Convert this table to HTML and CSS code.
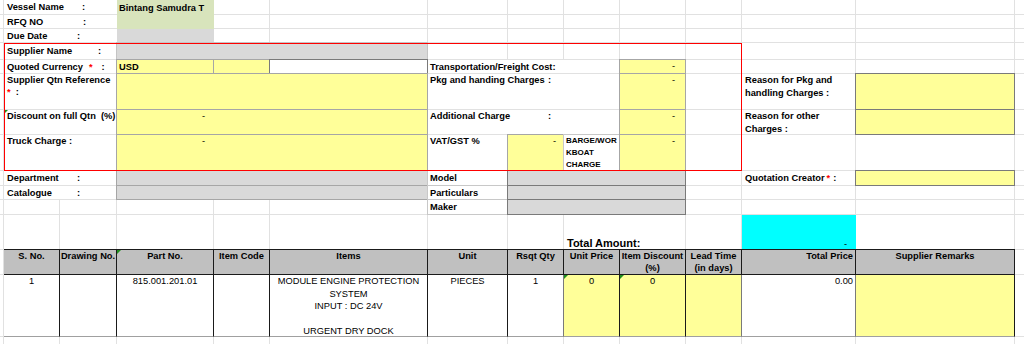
FILE: index.html
```html
<!DOCTYPE html>
<html>
<head>
<meta charset="utf-8">
<title>Supplier Quotation</title>
<link rel="stylesheet" href="styles.css">
</head>
<body>
<div class="sheet">
  <div class="cell lab mid a-vessel-l"><span class="k w75">Vessel Name</span>:</div>
  <div class="cell green val-top a-vessel-v">Bintang Samudra T</div>
  <div class="cell lab mid a-rfq-l"><span class="k w76">RFQ NO</span>:</div>
  <div class="cell lab mid a-due-l"><span class="k w70">Due Date</span>:</div>
  <div class="cell grey a-due-v"></div>

  <div class="cell lab mid a-sup-l"><span class="k w91">Supplier Name</span>:</div>
  <div class="cell grey bx a-sup-v"></div>
  <div class="cell lab mid a-cur-l"><span class="k">Quoted Currency</span><span class="req g6">*</span><span class="g9">:</span></div>
  <div class="cell yel bx mid b a-cur-v1">USD</div>
  <div class="cell yel bx a-cur-v2"></div>
  <div class="cell white bxd a-cur-v3"></div>
  <div class="cell lab top a-ref-l"><div>Supplier Qtn Reference</div><div><span class="req">*</span><span class="g5">:</span></div></div>
  <div class="cell yel bx a-ref-v"></div>
  <div class="cell lab top tri a-disc-l">Discount on full Qtn&nbsp; (%)</div>
  <div class="cell yel bx dash-mid a-disc-v">-</div>
  <div class="cell lab top a-truck-l">Truck Charge :</div>
  <div class="cell yel bx dash-mid a-truck-v">-</div>
  <div class="cell lab mid a-dept-l"><span class="k w70">Department</span>:</div>
  <div class="cell grey bx a-dept-v"></div>
  <div class="cell lab mid a-cat-l"><span class="k w70">Catalogue</span>:</div>
  <div class="cell grey bx a-cat-v"></div>

  <div class="cell rlab mid a-trans-l">Transportation/Freight Cost:</div>
  <div class="cell yel bx dash-r a-trans-v">-</div>
  <div class="cell rlab top a-pkg-l"><span class="k w118">Pkg and handing Charges</span>:</div>
  <div class="cell yel bx dash-r a-pkg-v">-</div>
  <div class="cell rlab top a-add-l"><span class="k w118">Additional Charge</span>:</div>
  <div class="cell yel bx dash-r a-add-v">-</div>
  <div class="cell rlab top a-vat-l">VAT/GST %</div>
  <div class="cell yel bx dash-rs a-vat-v">-</div>
  <div class="cell rlab small bxl a-barge-l">BARGE/WOR<wbr>KBOAT CHARGE</div>
  <div class="cell yel bx dash-r a-barge-v">-</div>
  <div class="cell rlab mid bxl a-model-l">Model</div>
  <div class="cell grey bxd a-model-v"></div>
  <div class="cell rlab mid bxl a-part-l">Particulars</div>
  <div class="cell grey bxd a-part-v"></div>
  <div class="cell rlab mid bxl a-maker-l">Maker</div>
  <div class="cell grey bxd a-maker-v"></div>

  <div class="cell rlab wrap a-rpkg-l">Reason for Pkg and handling Charges :</div>
  <div class="cell yel bxd a-rpkg-v"></div>
  <div class="cell rlab wrap a-roth-l">Reason for other Charges :</div>
  <div class="cell yel bxd a-roth-v"></div>
  <div class="cell rlab mid a-qc-l"><span class="k">Quotation Creator</span><span class="req g2">*</span><span class="g3">:</span></div>
  <div class="cell yel bxd a-qc-v"></div>

  <div class="redbox"></div>

  <div class="cell total-l">Total Amount:</div>
  <div class="cell cyan total-v">-</div>

  <div class="cell th first c2">S. No.</div>
  <div class="cell th c3">Drawing No.</div>
  <div class="cell th tri c4">Part No.</div>
  <div class="cell th c5">Item Code</div>
  <div class="cell th c6">Items</div>
  <div class="cell th c7">Unit</div>
  <div class="cell th c8">Rsqt Qty</div>
  <div class="cell th c9">Unit Price</div>
  <div class="cell th c10">Item Discount (%)</div>
  <div class="cell th c11">Lead Time (in days)</div>
  <div class="cell th right c12">Total Price</div>
  <div class="cell th c13">Supplier Remarks</div>

  <div class="cell td first c2">1</div>
  <div class="cell td c3"></div>
  <div class="cell td c4">815.001.201.01</div>
  <div class="cell td c5"></div>
  <div class="cell td c6">MODULE ENGINE PROTECTION<br>SYSTEM<br>INPUT : DC 24V<br>&nbsp;<br>URGENT DRY DOCK</div>
  <div class="cell td c7">PIECES</div>
  <div class="cell td c8">1</div>
  <div class="cell td yel tri soft c9">0</div>
  <div class="cell td yel tri c10">0</div>
  <div class="cell td yel c11"></div>
  <div class="cell td right soft c12">0.00</div>
  <div class="cell td yel soft c13"></div>
</div>
</body>
</html>
```

FILE: styles.css
```css
* { box-sizing: border-box; }

html, body {
  margin: 0;
  padding: 0;
  background: #fff;
}

body {
  width: 1024px;
  height: 344px;
  overflow: hidden;
  font-family: "Liberation Sans", Arial, sans-serif;
  font-size: 9.3px;
  color: #000;
}

.sheet {
  display: grid;
  grid-template-columns: 4px 56px 57px 97px 56px 158px 80px 56px 56px 66px 56px 114px 159px 9px;
  grid-template-rows: 15px 14px 14px 17px 14px 36px 25px 36px 15px 14px 15px 35px 25px 62px 7px;
  width: 1024px;
  height: 344px;
  background-color: #fff;
  background-image:
    linear-gradient(to right,
      transparent 3px, #e1e1e1 3px 4px, transparent 4px 59px, #e1e1e1 59px 60px,
      transparent 60px 116px, #e1e1e1 116px 117px, transparent 117px 213px, #e1e1e1 213px 214px,
      transparent 214px 269px, #e1e1e1 269px 270px, transparent 270px 427px, #e1e1e1 427px 428px,
      transparent 428px 507px, #e1e1e1 507px 508px, transparent 508px 563px, #e1e1e1 563px 564px,
      transparent 564px 619px, #e1e1e1 619px 620px, transparent 620px 685px, #e1e1e1 685px 686px,
      transparent 686px 741px, #e1e1e1 741px 742px, transparent 742px 855px, #e1e1e1 855px 856px,
      transparent 856px 1014px, #e1e1e1 1014px 1015px, transparent 1015px),
    linear-gradient(to bottom,
      transparent 14px, #e1e1e1 14px 15px, transparent 15px 28px, #e1e1e1 28px 29px,
      transparent 29px 42px, #e1e1e1 42px 43px, transparent 43px 59px, #e1e1e1 59px 60px,
      transparent 60px 73px, #e1e1e1 73px 74px, transparent 74px 109px, #e1e1e1 109px 110px,
      transparent 110px 134px, #e1e1e1 134px 135px, transparent 135px 170px, #e1e1e1 170px 171px,
      transparent 171px 185px, #e1e1e1 185px 186px, transparent 186px 199px, #e1e1e1 199px 200px,
      transparent 200px 214px, #e1e1e1 214px 215px, transparent 215px 249px, #e1e1e1 249px 250px,
      transparent 250px 274px, #e1e1e1 274px 275px, transparent 275px 336px, #e1e1e1 336px 337px,
      transparent 337px);
}

.cell {
  position: relative;
  line-height: 12px;
  padding: 0 2px;
  white-space: nowrap;
  overflow: hidden;
  min-width: 0;
}

.mid { display: flex; align-items: center; }
.top { display: block; }
.wrap { white-space: normal; line-height: 12.5px; }
.small {
  font-size: 8px;
  line-height: 12px;
  white-space: normal;
  padding-left: 2px;
  padding-right: 0;
}
.b { font-weight: bold; }
.right { text-align: right; }

/* label cells */
.lab {
  background: #fff;
  border-bottom: 1px solid #e1e1e1;
  font-weight: bold;
  padding-left: 3px;
}
.rlab {
  background: #fff;
  border-bottom: 1px solid #e1e1e1;
  font-weight: bold;
  padding-left: 2px;
}
.k { display: inline-block; }
.w70 { width: 70px; }
.w75 { width: 75px; }
.w76 { width: 76px; }
.w91 { width: 91px; }
.w118 { width: 118px; }
.g2 { margin-left: 2px; }
.g3 { margin-left: 3px; }
.g5 { margin-left: 5px; }
.g6 { margin-left: 6px; }
.g9 { margin-left: 9px; }
.req { color: #ff0000; }

/* fills */
.green { background: #d8e4bc; font-weight: bold; }
.val-top { padding-top: 2px; }
.grey { background: #d9d9d9; }
.yel { background: #ffff99; }
.white { background: #fff; }
.cyan { background: #00ffff; }

/* borders (shared 1px lines like spreadsheet cells) */
.bx { border: 1px solid #a6a6a6; margin: -1px 0 0 -1px; }
.bxd { border: 1px solid #7a7a7a; margin: -1px 0 0 -1px; }
.bxl { border: 1px solid #c8c8c8; margin: -1px 0 0 -1px; }

.dash-mid { padding-left: 85px; }
.dash-r { text-align: right; padding-right: 10px; }
.dash-rs { text-align: right; padding-right: 7px; }

/* comment indicator */
.tri::before {
  content: "";
  position: absolute;
  left: 0;
  top: 0;
  border-top: 4px solid #1f8f1f;
  border-right: 4px solid transparent;
}

/* red box around the charges block */
.redbox {
  grid-area: 4 / 2 / 9 / 12;
  border: 1px solid #ff0000;
  z-index: 5;
  pointer-events: none;
}

/* placements: row-start / col-start / row-end / col-end */
.a-vessel-l { grid-area: 1 / 2 / 2 / 4; }
.a-vessel-v { grid-area: 1 / 4 / 3 / 5; }
.a-rfq-l { grid-area: 2 / 2 / 3 / 4; }
.a-due-l { grid-area: 3 / 2 / 4 / 4; }
.a-due-v { grid-area: 3 / 4 / 4 / 5; }
.a-sup-l { grid-area: 4 / 2 / 5 / 4; }
.a-sup-v { grid-area: 4 / 4 / 5 / 7; border-color: #c4c4c4; }
.a-cur-l { grid-area: 5 / 2 / 6 / 4; }
.a-cur-v1 { grid-area: 5 / 4 / 6 / 5; }
.a-cur-v2 { grid-area: 5 / 5 / 6 / 6; }
.a-cur-v3 { grid-area: 5 / 6 / 6 / 7; }
.a-ref-l { grid-area: 6 / 2 / 7 / 4; }
.a-ref-v { grid-area: 6 / 4 / 7 / 7; }
.a-disc-l { grid-area: 7 / 2 / 8 / 4; }
.a-disc-v { grid-area: 7 / 4 / 8 / 7; }
.a-truck-l { grid-area: 8 / 2 / 9 / 4; }
.a-truck-v { grid-area: 8 / 4 / 9 / 7; }
.a-dept-l { grid-area: 9 / 2 / 10 / 4; }
.a-dept-v { grid-area: 9 / 4 / 10 / 7; }
.a-cat-l { grid-area: 10 / 2 / 11 / 4; }
.a-cat-v { grid-area: 10 / 4 / 11 / 7; }

.a-trans-l { grid-area: 5 / 7 / 6 / 10; }
.a-trans-v { grid-area: 5 / 10 / 6 / 11; }
.a-pkg-l { grid-area: 6 / 7 / 7 / 10; }
.a-pkg-v { grid-area: 6 / 10 / 7 / 11; }
.a-add-l { grid-area: 7 / 7 / 8 / 10; }
.a-add-v { grid-area: 7 / 10 / 8 / 11; }
.a-vat-l { grid-area: 8 / 7 / 9 / 8; }
.a-vat-v { grid-area: 8 / 8 / 9 / 9; }
.a-barge-l { grid-area: 8 / 9 / 9 / 10; }
.a-barge-v { grid-area: 8 / 10 / 9 / 11; }
.a-model-l { grid-area: 9 / 7 / 10 / 8; }
.a-model-v { grid-area: 9 / 8 / 10 / 11; }
.a-part-l { grid-area: 10 / 7 / 11 / 8; }
.a-part-v { grid-area: 10 / 8 / 11 / 11; }
.a-maker-l { grid-area: 11 / 7 / 12 / 8; }
.a-maker-v { grid-area: 11 / 8 / 12 / 11; }

.a-rpkg-l { grid-area: 6 / 12 / 7 / 13; padding-left: 3px; }
.a-rpkg-v { grid-area: 6 / 13 / 7 / 14; }
.a-roth-l { grid-area: 7 / 12 / 8 / 13; padding-left: 3px; }
.a-roth-v { grid-area: 7 / 13 / 8 / 14; }
.a-qc-l { grid-area: 9 / 12 / 10 / 13; padding-left: 3px; }
.a-qc-v { grid-area: 9 / 13 / 10 / 14; }

.total-l {
  grid-area: 12 / 9 / 13 / 11;
  background: #fff;
  border-right: 1px solid #e1e1e1;
  display: flex;
  align-items: flex-end;
  font-weight: bold;
  font-size: 11px;
  line-height: 13px;
  padding-left: 3px;
}
.total-v {
  grid-area: 12 / 12 / 13 / 13;
  display: flex;
  align-items: flex-end;
  justify-content: flex-end;
  padding-right: 9px;
}

/* item table */
.th {
  grid-row: 13;
  background: #c0c0c0;
  border: 1px solid #1a1a1a;
  margin: -1px 0 0 -1px;
  font-weight: bold;
  text-align: center;
  white-space: normal;
  padding: 0;
}
.th.right { text-align: right; padding-right: 2px; }
.td {
  grid-row: 14;
  border-left: 1px solid #1a1a1a;
  border-right: 1px solid #1a1a1a;
  border-bottom: 1px solid #a0a0a0;
  margin-left: -1px;
  text-align: center;
  line-height: 12.5px;
  padding: 0 2px;
}
.td.right { text-align: right; padding-right: 2px; }
.td.soft { border-left-color: #7a7a7a; }
.th.first, .td.first { border-left: none; margin-left: 0; }

.c2 { grid-column: 2; }
.c3 { grid-column: 3; }
.c4 { grid-column: 4; }
.c5 { grid-column: 5; }
.c6 { grid-column: 6; }
.c7 { grid-column: 7; }
.c8 { grid-column: 8; }
.c9 { grid-column: 9; }
.c10 { grid-column: 10; }
.c11 { grid-column: 11; }
.c12 { grid-column: 12; }
.c13 { grid-column: 13; }
```
